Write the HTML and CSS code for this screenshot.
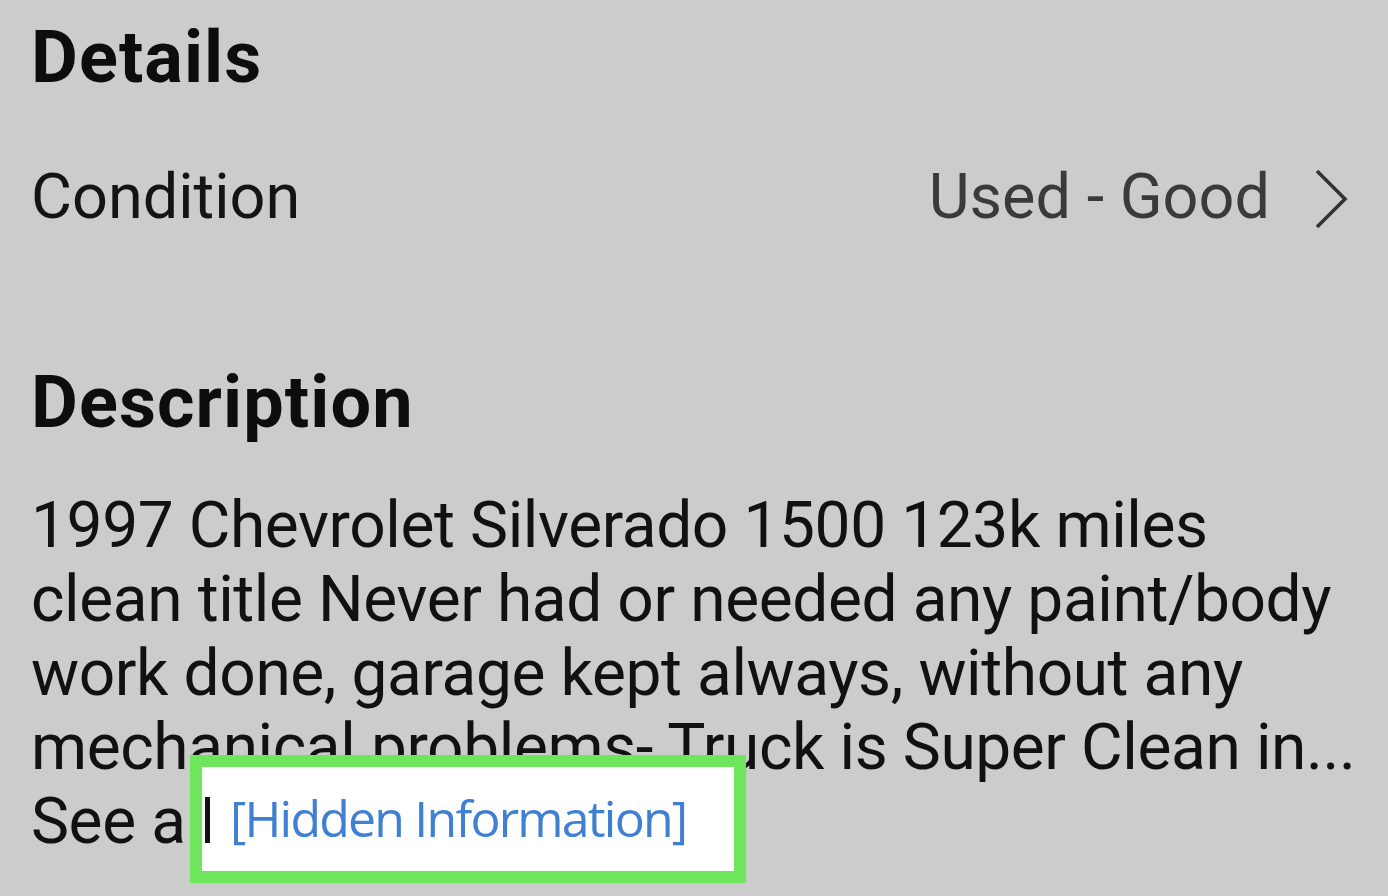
FILE: index.html
```html
<!DOCTYPE html>
<html>
<head>
<meta charset="utf-8">
<link rel="stylesheet" href="styles.css">
</head>
<body>
<div class="page">
  <h2 class="heading details-h">Details</h2>
  <div class="row">
    <span class="label">Condition</span>
    <span class="value">Used - Good
      <svg class="chev" viewBox="0 0 34 60" width="34" height="60"><path d="M3 2 L31 30 L3 58" fill="none" stroke="#333333" stroke-width="3.6"/></svg>
    </span>
  </div>
  <h2 class="heading desc-h">Description</h2>
  <p class="body">1997 Chevrolet Silverado 1500 123k miles<br>clean title Never had or needed any paint/body<br>work done, garage kept always, without any<br>mechanical problems- Truck is Super Clean in...<br>See all</p>
  <div class="hidden-box"><span class="caret"></span><span class="hidden-text">[Hidden Information]</span></div>
</div>
</body>
</html>
```
FILE: styles.css
```css
html, body { margin: 0; padding: 0; }
body {
  background: #cccccc;
  width: 1388px;
  height: 896px;
  overflow: hidden;
  font-family: Roboto, "Liberation Sans", sans-serif;
  color: #111;
}
.page {
  position: relative;
  padding: 0 40px 0 31px;
  height: 896px;
}
.heading {
  margin: 0;
  font-weight: 700;
  font-size: 72px;
  line-height: 72px;
  letter-spacing: 1.1px;
  color: #0d0d0d;
}
.details-h { padding-top: 22px; }
.row {
  display: flex;
  justify-content: space-between;
  align-items: center;
  height: 63px;
  margin-top: 71px;
}
.label { font-size: 63px; color: #141414; line-height: 63px; }
.value {
  display: flex;
  align-items: center;
  gap: 44px;
  font-size: 63px;
  line-height: 63px;
  color: #3a3a3a;
}
.chev { margin-top: 4px; }
.desc-h { margin-top: 139px; }
.body {
  margin: 50px 0 0;
  font-size: 64px;
  line-height: 74px;
  letter-spacing: -0.4px;
  white-space: nowrap;
  color: #111;
}
.hidden-box {
  position: absolute;
  left: 190px;
  top: 755px;
  width: 532px;
  height: 104px;
  border: 12px solid #6ee65b;
  background: #fff;
  display: flex;
  align-items: flex-start;
}
.caret {
  width: 5px;
  height: 46px;
  background: #111;
  margin-left: 3px;
  margin-top: 30px;
  margin-right: 20px;
}
.hidden-text {
  font-family: "Open Sans", "Noto Sans", sans-serif;
  font-size: 50px;
  line-height: 50px;
  margin-top: 26px;
  color: #3f80d2;
  letter-spacing: -1.8px;
}
```
